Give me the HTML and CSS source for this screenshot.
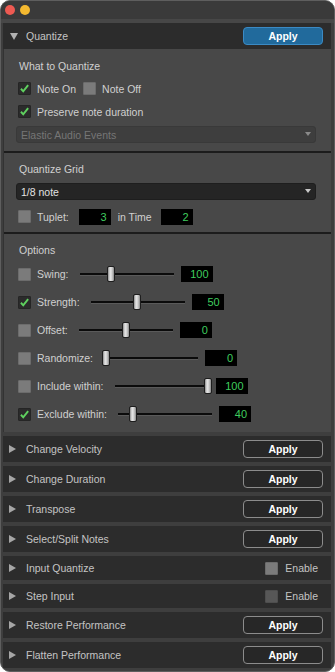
FILE: index.html
```html
<!DOCTYPE html>
<html lang="en">
<head>
  <meta charset="UTF-8" />
  <meta name="viewport" content="width=device-width, initial-scale=1.0" />
  <title>MIDI Real-Time</title>
  <link rel="stylesheet" href="styles.css">
</head>
<body>
  <div class="window">
    <div class="titlebar">
      <span class="light red"></span>
      <span class="light yellow"></span>
    </div>

    <div class="panels">
      <!-- open panel -->
      <div class="block">
        <div class="row-head">
          <span class="tri-down"></span>
          <span class="title">Quantize</span>
          <button class="apply blue">Apply</button>
        </div>

        <div class="body">
          <div class="section s1">
            <div class="label">What to Quantize</div>
            <div class="line first">
              <span class="check on"><svg viewBox="0 0 13 13"><path d="M2.3 6.8 L5 9.8 L10.8 2.4" /></svg></span>
              <span class="txt">Note On</span>
              <span class="check off ml"></span>
              <span class="txt">Note Off</span>
            </div>
            <div class="line second">
              <span class="check on"><svg viewBox="0 0 13 13"><path d="M2.3 6.8 L5 9.8 L10.8 2.4" /></svg></span>
              <span class="txt">Preserve note duration</span>
            </div>
            <div class="select disabled">Elastic Audio Events<span class="arrow"></span></div>
          </div>

          <div class="section s2">
            <div class="label">Quantize Grid</div>
            <div class="select">1/8 note<span class="arrow"></span></div>
            <div class="line tuplet">
              <span class="check off"></span>
              <span class="txt">Tuplet:</span>
              <span class="num t1">3</span>
              <span class="txt">in Time</span>
              <span class="num t2">2</span>
            </div>
          </div>

          <div class="section s3">
            <div class="label">Options</div>

            <div class="opt">
              <span class="check off"></span>
              <span class="txt">Swing:</span>
              <span class="track"><span class="thumb" style="left: 29%"></span></span>
              <span class="num">100</span>
            </div>
            <div class="opt">
              <span class="check on"><svg viewBox="0 0 13 13"><path d="M2.3 6.8 L5 9.8 L10.8 2.4" /></svg></span>
              <span class="txt">Strength:</span>
              <span class="track"><span class="thumb" style="left: 45%"></span></span>
              <span class="num">50</span>
            </div>
            <div class="opt">
              <span class="check off"></span>
              <span class="txt">Offset:</span>
              <span class="track"><span class="thumb" style="left: 46%"></span></span>
              <span class="num">0</span>
            </div>
            <div class="opt">
              <span class="check off"></span>
              <span class="txt">Randomize:</span>
              <span class="track near"><span class="thumb" style="left: 0%"></span></span>
              <span class="num">0</span>
            </div>
            <div class="opt">
              <span class="check off"></span>
              <span class="txt">Include within:</span>
              <span class="track"><span class="thumb" style="left: 95%"></span></span>
              <span class="num">100</span>
            </div>
            <div class="opt">
              <span class="check on"><svg viewBox="0 0 13 13"><path d="M2.3 6.8 L5 9.8 L10.8 2.4" /></svg></span>
              <span class="txt">Exclude within:</span>
              <span class="track"><span class="thumb" style="left: 12%"></span></span>
              <span class="num">40</span>
            </div>
          </div>
        </div>
      </div>

      <!-- closed panels -->
      <div class="block closed">
        <span class="tri-right"></span><span class="title">Change Velocity</span>
        <button class="apply">Apply</button>
      </div>
      <div class="block closed">
        <span class="tri-right"></span><span class="title">Change Duration</span>
        <button class="apply">Apply</button>
      </div>
      <div class="block closed">
        <span class="tri-right"></span><span class="title">Transpose</span>
        <button class="apply">Apply</button>
      </div>
      <div class="block closed">
        <span class="tri-right"></span><span class="title">Select/Split Notes</span>
        <button class="apply">Apply</button>
      </div>
      <div class="block closed short">
        <span class="tri-right"></span><span class="title">Input Quantize</span>
        <span class="check off"></span><span class="enable">Enable</span>
      </div>
      <div class="block closed short">
        <span class="tri-right"></span><span class="title">Step Input</span>
        <span class="check dim"></span><span class="enable">Enable</span>
      </div>
      <div class="block closed">
        <span class="tri-right"></span><span class="title">Restore Performance</span>
        <button class="apply">Apply</button>
      </div>
      <div class="block closed">
        <span class="tri-right"></span><span class="title">Flatten Performance</span>
        <button class="apply">Apply</button>
      </div>
    </div>
  </div>
</body>
</html>
```

FILE: styles.css
```css
body, html {
  margin: 0;
  padding: 0;
  background: #ffffff;
  font-family: "Liberation Sans", Arial, sans-serif;
  font-size: 10.5px;
}
.window {
  width: 335px;
  height: 672px;
  box-sizing: border-box;
  border: 1px solid #5e5e5e;
  border-radius: 10px;
  background: #3e3e3e;
  overflow: hidden;
}
.titlebar {
  height: 18px;
  background: #3a3a3a;
  border-bottom: 4px solid #474747;
  display: flex;
  align-items: center;
  gap: 5px;
  padding-left: 4px;
}
.light {
  width: 10px;
  height: 10px;
  border-radius: 50%;
}
.red { background: #ee5a52; }
.yellow { background: #f4b930; }

.panels {
  padding: 0 3px 0 2px;
  display: flex;
  flex-direction: column;
  gap: 4px;
}
.block {
  background: #2c2c2c;
}
.row-head {
  height: 26px;
  display: flex;
  align-items: center;
  padding: 0 8px 0 7px;
}
.title {
  color: #c4c4c4;
  flex: 1;
}
.row-head .title { margin-left: 8px; }
.tri-down {
  width: 0;
  height: 0;
  border-top: 7px solid #b2b2b2;
  border-left: 4px solid transparent;
  border-right: 4px solid transparent;
}
.tri-right {
  width: 0;
  height: 0;
  border-left: 7px solid #a6a6a6;
  border-top: 4px solid transparent;
  border-bottom: 4px solid transparent;
}
.apply {
  width: 80px;
  height: 18px;
  box-sizing: border-box;
  border: 1px solid #8c8c8c;
  border-radius: 4px;
  background: #272727;
  color: #fff;
  font-family: "Liberation Sans", Arial, sans-serif;
  font-size: 10.5px;
  font-weight: bold;
  padding: 0;
}
.apply.blue {
  background: #216a9c;
  border-color: #3b8ac4;
}

/* open panel body */
.body {
  background: #484848;
  border-left: 1px solid #333;
  color: #d0d0d0;
}
.section {
  padding: 9px 15px 8px 14px;
  border-bottom: 2px solid #1c1c1c;
}
.s1 { padding-top: 10px; }
.s3 { border-bottom: none; padding-bottom: 10px; }
.label {
  height: 14px;
  line-height: 14px;
  padding-left: 1px;
}
.line {
  display: flex;
  align-items: center;
  height: 13px;
}
.line.first { margin-top: 9px; }
.line.second { margin-top: 10px; }
.line.tuplet { margin-top: 9px; height: 15px; }
.txt {
  margin-left: 6px;
  white-space: nowrap;
}
.check {
  width: 13px;
  height: 13px;
  box-sizing: border-box;
  flex: none;
  border-radius: 1px;
}
.check.on {
  background: #2b2b2b;
  border: 1px solid #252525;
}
.check.off {
  background: #7b7b7b;
  border: 1px solid #6c6c6c;
}
.check.dim {
  background: #575757;
  border: 1px solid #4e4e4e;
}
.check svg {
  display: block;
  width: 11px;
  height: 11px;
}
.check path {
  fill: none;
  stroke: #5fd05f;
  stroke-width: 2.3;
}
.ml { margin-left: 7px; }

.select {
  position: relative;
  height: 17px;
  line-height: 17px;
  box-sizing: border-box;
  margin: 8px 0 0 -2px;
  padding-left: 4px;
  border-radius: 3px;
  background: #252525;
  border: 1px solid #1e1e1e;
  color: #e2e2e2;
}
.s2 .select { margin-top: 7px; }
.select.disabled {
  background: #3e3e3e;
  border-color: #393939;
  color: #767676;
}
.arrow {
  position: absolute;
  right: 4px;
  top: 5px;
  border-top: 4px solid #c8c8c8;
  border-left: 3.5px solid transparent;
  border-right: 3.5px solid transparent;
}
.disabled .arrow { border-top-color: #8a8a8a; }

.num {
  width: 32px;
  height: 16px;
  line-height: 16px;
  box-sizing: border-box;
  background: #000;
  color: #3fcc5e;
  text-align: right;
  padding-right: 4px;
  font-size: 11px;
  flex: none;
}
.num.t1 { margin-left: 10px; }
.num.t2 { margin-left: 9px; }
.tuplet .num + .txt { margin-left: 7px; }

.opt {
  display: flex;
  align-items: center;
  height: 16px;
  margin-top: 12px;
}
.label + .opt { margin-top: 9px; }
.track {
  position: relative;
  width: 94px;
  height: 2px;
  margin: 0 7px 0 11px;
  background: #0b0b0b;
  box-shadow: 0 1px 0 #5a5a5a;
  flex: none;
}
.track.near { margin-left: 9px; width: 96px; }
.thumb {
  position: absolute;
  top: -7px;
  width: 8px;
  height: 16px;
  box-sizing: border-box;
  border: 1px solid #1e1e1e;
  border-radius: 2px;
  background: linear-gradient(90deg, #8e8e8e, #e6e6e6 35%, #cfcfcf 65%, #8a8a8a);
}

/* collapsed rows */
.closed {
  height: 26px;
  display: flex;
  align-items: center;
  padding: 0 8px 0 6px;
}
.closed .title { margin-left: 10px; }
.closed.short {
  height: 24px;
  padding-right: 13px;
}
.enable {
  color: #c4c4c4;
  margin-left: 7px;
}
```
